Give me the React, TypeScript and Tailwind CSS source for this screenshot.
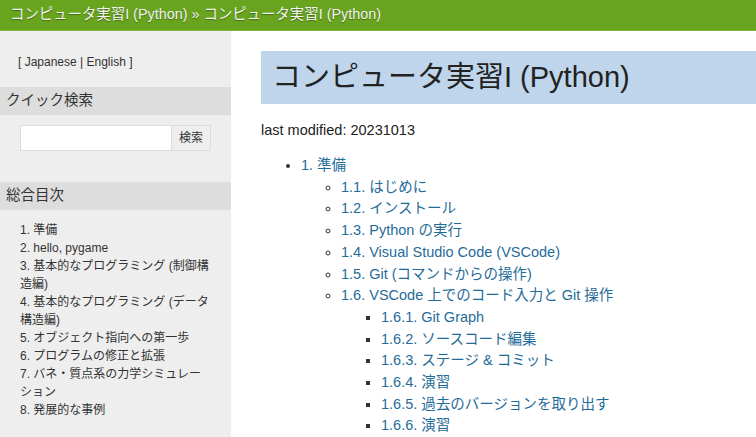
import React from "react";

const font = { fontFamily: '"Liberation Sans", "Noto Sans CJK JP", sans-serif' };

const toc = [
  "1. 準備",
  "2. hello, pygame",
  "3. 基本的なプログラミング (制御構造編)",
  "4. 基本的なプログラミング (データ構造編)",
  "5. オブジェクト指向への第一歩",
  "6. プログラムの修正と拡張",
  "7. バネ・質点系の力学シミュレーション",
  "8. 発展的な事例",
];

const sub = [
  "1.1. はじめに",
  "1.2. インストール",
  "1.3. Python の実行",
  "1.4. Visual Studio Code (VSCode)",
  "1.5. Git (コマンドからの操作)",
];

const subsub = [
  "1.6.1. Git Graph",
  "1.6.2. ソースコード編集",
  "1.6.3. ステージ & コミット",
  "1.6.4. 演習",
  "1.6.5. 過去のバージョンを取り出す",
  "1.6.6. 演習",
];

export default function App() {
  return (
    <div className="w-[756px] h-[437px] overflow-hidden bg-white text-[#222]" style={font}>
      <div className="h-[31px] bg-[#68a41d] border-b border-[#7fb53a] flex items-center pl-[10px] text-[14.4px] text-[#f2f2f2] [text-shadow:0_1px_1px_rgba(0,0,0,0.35)]">
        コンピュータ実習I (Python) » コンピュータ実習I (Python)
      </div>
      <div className="flex h-[406px]">
        <div className="w-[231px] shrink-0 bg-[#eeeeee] text-[#333]">
          <div className="pt-[22px] pl-[18px] text-[12px] h-[56px]">[ Japanese | English ]</div>
          <div className="bg-[#dddddd] h-[28px] flex items-center pl-[6px] text-[14.5px] text-[#333]">クイック検索</div>
          <div className="flex pl-[20px] pt-[10px] h-[67px]">
            <div className="w-[152px] h-[26px] bg-white border border-[#dcdcdc]"></div>
            <div className="w-[39px] h-[26px] bg-[#eeeeee] border border-[#dcdcdc] border-l-0 flex items-center justify-center text-[12px] text-[#333]">検索</div>
          </div>
          <div className="bg-[#dddddd] h-[28px] flex items-center pl-[6px] text-[14.5px] text-[#333]">総合目次</div>
          <ul className="pl-[20px] pr-[21px] pt-[11px] text-[12px] leading-[18px] text-[#333]">
            {toc.map((t) => (
              <li key={t}>{t}</li>
            ))}
          </ul>
        </div>
        <div className="flex-1 pl-[30px] pt-[20px]">
          <div className="h-[53px] bg-[#bfd5eb] flex items-center pl-[11px] text-[29px] text-[#222] whitespace-nowrap">
            コンピュータ実習I (Python)
          </div>
          <p className="mt-[16px] text-[14.5px] leading-[20px]">last modified: 20231013</p>
          <ul className="mt-[15px] pl-[40px] list-disc text-[14.5px] leading-[21.7px] text-[#1f6c99] marker:text-[#333]">
            <li>
              1. 準備
              <ul className="pl-[40px] list-[circle]">
                {sub.map((s) => (
                  <li key={s}>{s}</li>
                ))}
                <li>
                  1.6. VSCode 上でのコード入力と Git 操作
                  <ul className="pl-[40px] list-[square]">
                    {subsub.map((s) => (
                      <li key={s}>{s}</li>
                    ))}
                  </ul>
                </li>
              </ul>
            </li>
          </ul>
        </div>
      </div>
    </div>
  );
}
